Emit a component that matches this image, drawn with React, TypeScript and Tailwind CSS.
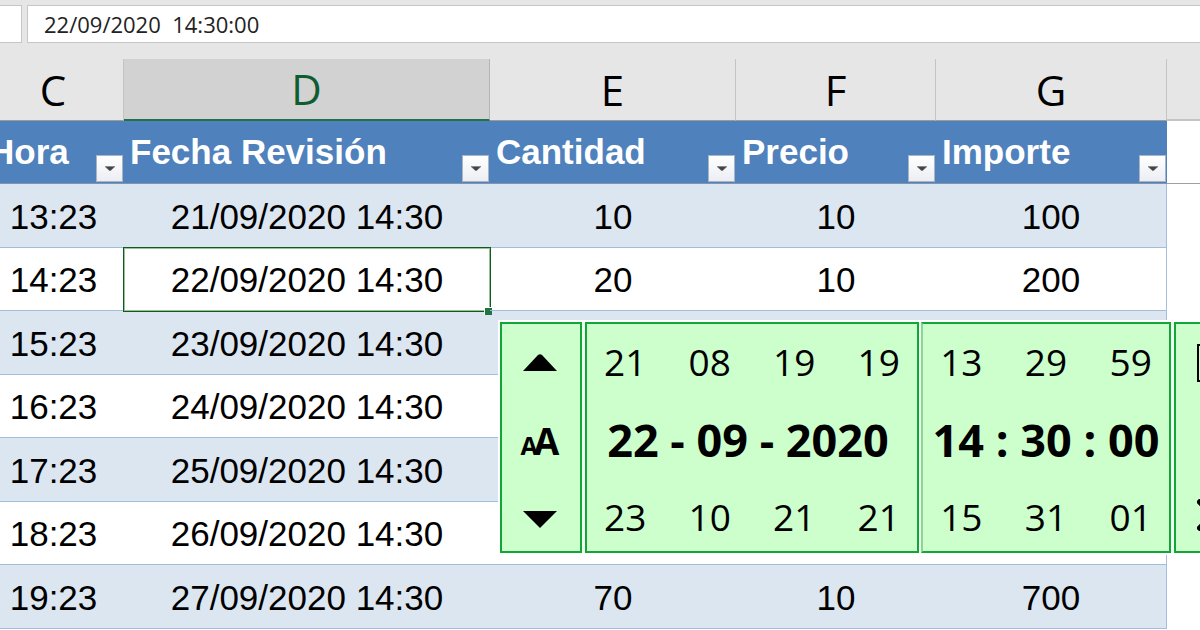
import { useState } from "react";

// Columnas visibles de la hoja
const COLUMNS = [
  { letter: "C", title: "Hora", width: "w-[141px]", selected: false },
  { letter: "D", title: "Fecha Revisión", width: "w-[366px]", selected: true },
  { letter: "E", title: "Cantidad", width: "w-[246px]", selected: false },
  { letter: "F", title: "Precio", width: "w-[200px]", selected: false },
  { letter: "G", title: "Importe", width: "w-[231px]", selected: false },
];

// Las filas que tapa el selector no llevan importes
const ROWS = [
  ["13:23", "21/09/2020 14:30", "10", "10", "100"],
  ["14:23", "22/09/2020 14:30", "20", "10", "200"],
  ["15:23", "23/09/2020 14:30", "", "", ""],
  ["16:23", "24/09/2020 14:30", "", "", ""],
  ["17:23", "25/09/2020 14:30", "", "", ""],
  ["18:23", "26/09/2020 14:30", "", "", ""],
  ["19:23", "27/09/2020 14:30", "70", "10", "700"],
];

// Valores anterior y siguiente de cada parte de la fecha y la hora
const DATE_PREV = ["21", "08", "19", "19"];
const DATE_NEXT = ["23", "10", "21", "21"];
const TIME_PREV = ["13", "29", "59"];
const TIME_NEXT = ["15", "31", "01"];

function FilterButton({ title }: { title: string }) {
  return (
    <button
      type="button"
      aria-label={`Filtrar ${title}`}
      className="flex h-[27px] w-[27px] shrink-0 items-center justify-center border border-[#a9b4c4] bg-linear-to-b from-white to-[#eceef4]"
    >
      <svg width="10" height="5" viewBox="0 0 10 5" aria-hidden>
        <path d="M0 0h10v1L6 4.500H4L0 1z" fill="#8a8a8a" />
        <path d="M1 1h8L5 5z" fill="#444" />
      </svg>
    </button>
  );
}

function FormulaBar() {
  const [value, setValue] = useState("22/09/2020  14:30:00");
  return (
    <div className="flex h-[59px] items-start gap-[5px] bg-[#e6e6e6] pt-[5px]">
      <div className="h-[38px] w-[22px] shrink-0 border border-l-0 border-[#c6c6c6] bg-white" />
      <input
        aria-label="Barra de fórmulas"
        value={value}
        onChange={(e) => setValue(e.target.value)}
        className="h-[38px] min-w-0 flex-1 border border-r-0 border-[#c6c6c6] bg-white pl-4 font-['Open_Sans',sans-serif] text-[22px] text-[#222] outline-none"
      />
    </div>
  );
}

function Sheet() {
  return (
    <table className="-ml-[17px] w-[calc(100%+17px)] table-fixed border-separate border-spacing-0 font-['Liberation_Sans',Arial,sans-serif] text-[35px] leading-10">
      <colgroup>
        {COLUMNS.map((c) => (
          <col key={c.letter} className={c.width} />
        ))}
        <col />
      </colgroup>
      <thead>
        <tr className="h-[62px] bg-[#e6e6e6] font-['Open_Sans',sans-serif] text-[42px]">
          {COLUMNS.map((c) => (
            <th
              key={c.letter}
              scope="col"
              className={
                c.selected
                  ? "border-r border-b-2 border-r-[#b5b5b5] border-b-[#217346] bg-[#d2d2d2] p-0 font-normal text-[#0e5c2f]"
                  : "border-r border-b border-r-[#c4c4c4] border-b-[#9b9b9b] p-0 font-normal"
              }
            >
              {c.letter}
            </th>
          ))}
          <td className="border-b-2 border-[#c4c4c4] p-0" />
        </tr>
        <tr className="h-[63px] text-white">
          {COLUMNS.map((c) => (
            <th
              key={c.letter}
              scope="col"
              className="border-b border-[#8394ad] bg-[#4f81bd] p-0 text-left align-bottom font-bold"
            >
              <div className="flex h-[62px] items-end justify-between pr-px pb-px pl-1.5">
                <span className="self-center whitespace-nowrap">{c.title}</span>
                <FilterButton title={c.title} />
              </div>
            </th>
          ))}
          <td className="border-b border-[#a0a0a0] p-0" />
        </tr>
      </thead>
      <tbody>
        {ROWS.map((row) => (
          <tr key={row[0]} className="odd:h-16 odd:bg-[#dce6f1] even:h-[63px]">
            {row.map((cell, i) => (
              <td
                key={COLUMNS[i].letter}
                className="relative border-b border-[#a5bddd] p-0 pt-0.5 text-center nth-5:border-r"
              >
                {cell}
                {/* Celda activa con su controlador de relleno */}
                {cell === "22/09/2020 14:30" && (
                  <span className="absolute -inset-x-px -top-px -bottom-0.5 border border-[#0b5d17] shadow-[inset_0_0_0_1px_#9dbd9f]">
                    <span className="absolute -right-0.5 -bottom-1 h-2 w-2 border-t border-l border-white bg-[#217346]" />
                  </span>
                )}
              </td>
            ))}
            <td className="bg-white p-0" />
          </tr>
        ))}
      </tbody>
    </table>
  );
}

function ValueRow({ values }: { values: string[] }) {
  return (
    <div className="-mx-1 flex justify-around">
      {values.map((v, i) => (
        <button key={i} type="button" className="flex-1 text-center">
          {v}
        </button>
      ))}
    </div>
  );
}

function DateTimePicker() {
  return (
    <div className="absolute top-[320px] left-[498px] flex h-[235px] w-[800px] gap-[3px] border-2 border-white bg-[#effff0] font-['Open_Sans',sans-serif] text-[37px] leading-[50px]">
      <div className="flex w-[82px] flex-col items-center justify-between border-2 border-[#12a537] bg-[#ccffcc] pt-[13px] pr-0.5 pb-[9px]">
        <button type="button" aria-label="Subir" className="flex h-[50px] w-full items-center justify-center">
          <svg width="34" height="17" viewBox="0 0 34 17" aria-hidden>
            <path d="M0 17 15 1q2-1.500 4 0L34 17z" />
          </svg>
        </button>
        <button type="button" aria-label="Tamaño de letra" className="flex items-baseline pt-1.5 font-bold">
          <span className="text-[25px]">A</span>
          <span className="-ml-1 text-[37px]">A</span>
        </button>
        <button type="button" aria-label="Bajar" className="flex h-[50px] w-full items-center justify-center pt-1">
          <svg width="34" height="17" viewBox="0 0 34 17" aria-hidden>
            <path d="M0 0h34L17 17z" />
          </svg>
        </button>
      </div>

      <div className="flex w-[334px] flex-col justify-between border-2 border-[#12a537] bg-[#ccffcc] pt-[13px] pb-[9px]">
        <ValueRow values={DATE_PREV} />
        <p className="pr-2 text-center text-[45px] font-bold whitespace-nowrap">22 - 09 - 2020</p>
        <ValueRow values={DATE_NEXT} />
      </div>

      <div className="-ml-px flex w-[250px] flex-col justify-between border-2 border-[#12a537] border-l-[#8cd695] bg-[#ccffcc] pt-[13px] pb-[9px]">
        <ValueRow values={TIME_PREV} />
        <p className="text-center text-[45px] font-bold whitespace-nowrap">14 : 30 : 00</p>
        <ValueRow values={TIME_NEXT} />
      </div>

      {/* Panel de acciones, sale por el borde derecho */}
      <div className="flex flex-1 flex-col justify-between border-2 border-[#12a537] bg-[#ccffcc] py-5 pl-[21px]">
        <button type="button" aria-label="Maximizar" className="h-[38px] w-[38px] border-2 border-black" />
        <button type="button" aria-label="Cerrar" className="h-8 w-8">
          <svg width="32" height="32" viewBox="0 0 32 32" aria-hidden>
            <path d="M3 3l26 26M29 3L3 29" stroke="#000" strokeWidth="6" strokeLinecap="round" />
          </svg>
        </button>
      </div>
    </div>
  );
}

export default function App() {
  return (
    <div className="relative min-h-screen overflow-hidden bg-white text-black">
      <FormulaBar />
      <Sheet />
      <DateTimePicker />
    </div>
  );
}
